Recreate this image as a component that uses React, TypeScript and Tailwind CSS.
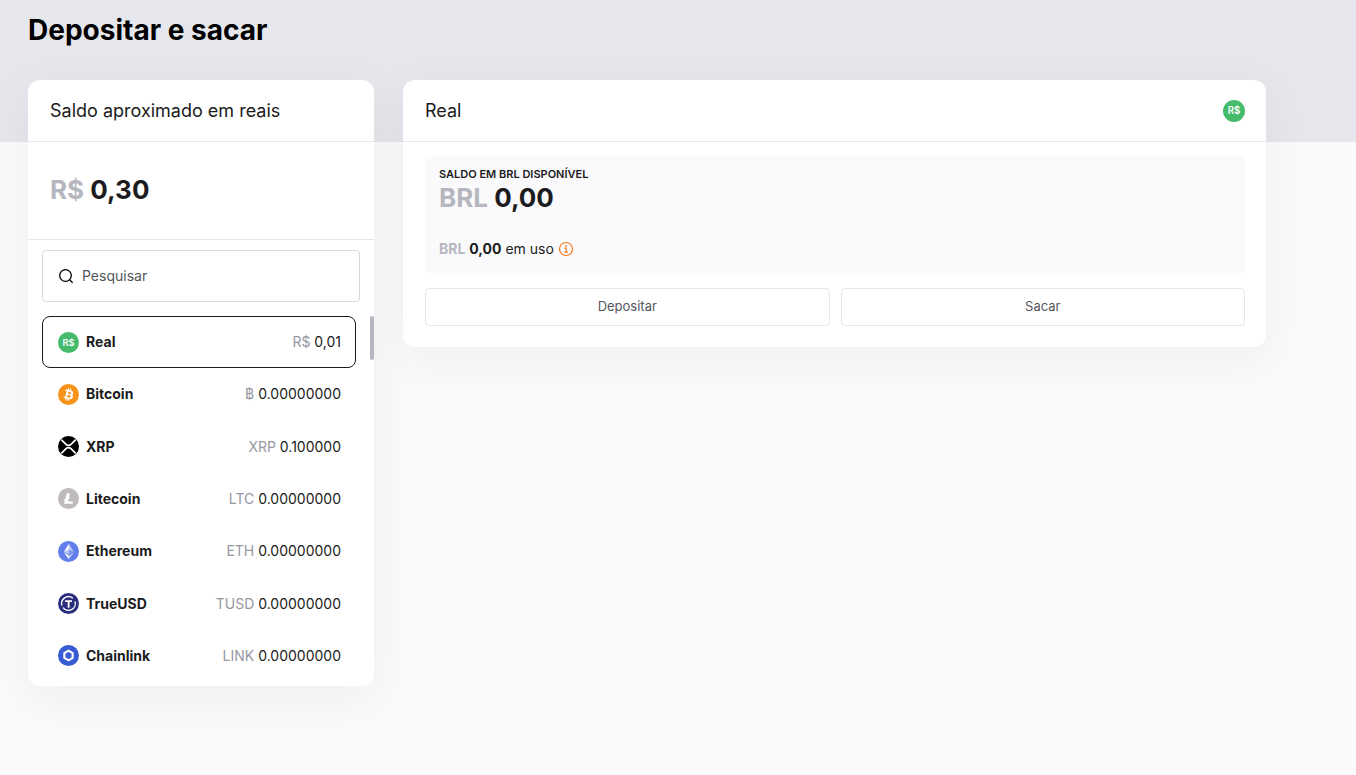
import React, { useState } from "react";

// Define types for the wallet list
interface Coin {
  id: string;
  name: string;
  symbol: string;
  balance: string;
  icon: React.ReactNode;
}

const RealIcon = () => (
  <svg viewBox="0 0 32 32" className="size-full" aria-hidden="true">
    <circle cx="16" cy="16" r="16" fill="#45bb6c" />
    <text
      x="16"
      y="21"
      textAnchor="middle"
      fill="#fff"
      className="font-['Inter',sans-serif] text-[14px] font-semibold"
    >
      R$
    </text>
  </svg>
);

const BitcoinIcon = () => (
  <svg viewBox="0 0 32 32" className="size-full" aria-hidden="true">
    <circle cx="16" cy="16" r="16" fill="#f7931a" />
    <path
      fill="#fff"
      fillRule="evenodd"
      d="M23.189 14.02c.314-2.096-1.283-3.223-3.465-3.975l.708-2.84-1.728-.43-.69 2.765c-.454-.114-.92-.22-1.385-.326l.695-2.783L15.596 6l-.708 2.839c-.376-.086-.746-.17-1.104-.26l.002-.009-2.384-.595-.46 1.846s1.283.294 1.256.312c.7.175.826.638.805 1.006l-.806 3.235c.048.012.11.03.18.057l-.183-.045-1.13 4.532c-.086.212-.303.531-.793.41.018.025-1.256-.313-1.256-.313l-.858 1.978 2.25.561c.418.105.828.215 1.231.318l-.715 2.872 1.727.43.708-2.84c.472.127.93.245 1.378.357l-.706 2.828 1.728.43.715-2.866c2.948.558 5.164.333 6.097-2.333.752-2.146-.037-3.385-1.588-4.192 1.13-.26 1.98-1.003 2.207-2.538zm-3.95 5.538c-.533 2.147-4.148.986-5.32.695l.95-3.805c1.172.293 4.929.872 4.37 3.11zm.535-5.569c-.487 1.953-3.495.96-4.47.717l.86-3.45c.975.243 4.118.696 3.61 2.733z"
    />
  </svg>
);

const XrpIcon = () => (
  <svg viewBox="0 0 32 32" className="size-full" aria-hidden="true">
    <circle cx="16" cy="16" r="16" fill="#000" />
    <g fill="none" stroke="#fff" strokeWidth="2.6">
      <path d="M5 5.500l7.300 7.300a5.200 5.200 0 007.400 0L27 5.500" />
      <path d="M5 26.500l7.300-7.300a5.200 5.200 0 017.400 0l7.300 7.300" />
    </g>
  </svg>
);

const LitecoinIcon = () => (
  <svg viewBox="0 0 32 32" className="size-full" aria-hidden="true">
    <circle cx="16" cy="16" r="16" fill="#bfbbbb" />
    <path
      fill="#fff"
      d="M10.427 19.214L9 19.768l.688-2.759 1.444-.58L13.213 8h5.129l-1.519 6.196 1.41-.571-.68 2.75-1.427.571-.848 3.483H23L22.127 24H9.252z"
    />
  </svg>
);

const EthereumIcon = () => (
  <svg viewBox="0 0 32 32" className="size-full" aria-hidden="true">
    <circle cx="16" cy="16" r="16" fill="#627eea" />
    <g fill="#fff">
      <path fillOpacity=".6" d="M16.498 4v8.870l7.497 3.350z" />
      <path d="M16.498 4L9 16.220l7.498-3.350z" />
      <path fillOpacity=".6" d="M16.498 21.968v6.027L24 17.616z" />
      <path d="M16.498 27.995v-6.028L9 17.616z" />
      <path fillOpacity=".2" d="M16.498 20.573l7.497-4.353-7.497-3.348z" />
      <path fillOpacity=".6" d="M9 16.220l7.498 4.353v-7.701z" />
    </g>
  </svg>
);

const TrueUsdIcon = () => (
  <svg viewBox="0 0 32 32" className="size-full" aria-hidden="true">
    <circle cx="16" cy="16" r="16" fill="#2b2e7f" />
    <g fill="none" stroke="#fff">
      <path
        d="M22.500 7.800A10.500 10.500 0 006 19.200M7.500 22.200A10.500 10.500 0 0026 13"
        strokeWidth="2"
      />
      <path d="M10.800 12.500h10.500M16.200 12.500v10" strokeWidth="2.800" />
    </g>
  </svg>
);

const ChainlinkIcon = () => (
  <svg viewBox="0 0 32 32" className="size-full" aria-hidden="true">
    <circle cx="16" cy="16" r="16" fill="#375bd2" />
    <path
      d="M16 8.700l6.300 3.650v7.300L16 23.300l-6.300-3.650v-7.300z"
      fill="none"
      stroke="#fff"
      strokeWidth="3.200"
    />
  </svg>
);

const coins: Coin[] = [
  { id: "brl", name: "Real", symbol: "R$", balance: "0,01", icon: <RealIcon /> },
  { id: "btc", name: "Bitcoin", symbol: "฿", balance: "0.00000000", icon: <BitcoinIcon /> },
  { id: "xrp", name: "XRP", symbol: "XRP", balance: "0.100000", icon: <XrpIcon /> },
  { id: "ltc", name: "Litecoin", symbol: "LTC", balance: "0.00000000", icon: <LitecoinIcon /> },
  { id: "eth", name: "Ethereum", symbol: "ETH", balance: "0.00000000", icon: <EthereumIcon /> },
  { id: "tusd", name: "TrueUSD", symbol: "TUSD", balance: "0.00000000", icon: <TrueUsdIcon /> },
  { id: "link", name: "Chainlink", symbol: "LINK", balance: "0.00000000", icon: <ChainlinkIcon /> },
];

const cardClass = "rounded-xl bg-white shadow-[0_12px_48px_rgba(30,30,40,0.05)]";

interface CoinRowProps {
  coin: Coin;
  selected: boolean;
  onSelect: (id: string) => void;
}

const CoinRow: React.FC<CoinRowProps> = ({ coin, selected, onSelect }) => (
  <li>
    <button
      type="button"
      aria-pressed={selected}
      onClick={() => onSelect(coin.id)}
      className={`flex h-[52px] w-full items-center rounded-lg border pr-3.5 pl-[15px] text-left ${
        selected ? "border-[#1b1b20]" : "border-transparent"
      }`}
    >
      <span className="size-[21px] shrink-0">{coin.icon}</span>
      <span className="ml-[7px] text-sm font-bold">{coin.name}</span>
      <span className="ml-auto text-sm">
        <span className="text-[#9698a2]">{coin.symbol}</span> {coin.balance}
      </span>
    </button>
  </li>
);

const App: React.FC = () => {
  const [selected, setSelected] = useState("brl");
  const [search, setSearch] = useState("");

  const visible = coins.filter((coin) =>
    coin.name.toLowerCase().includes(search.toLowerCase()),
  );

  return (
    <div className="min-h-screen bg-[linear-gradient(#e6e7ec_142px,#fafafc_142px)] pr-[90px] pb-8 pl-7 font-['Inter',sans-serif] text-[#1b1b20]">
      <h1 className="pt-3 text-[28px] leading-9 font-bold text-black">
        Depositar e sacar
      </h1>

      <main className="mt-8 grid grid-cols-[346px_1fr] items-start gap-[29px]">
        {/* Wallet list */}
        <section className={cardClass}>
          <h2 className="flex h-[62px] items-center border-b border-[#e6e7ec] px-[22px] text-[18px]">
            Saldo aproximado em reais
          </h2>
          <p className="flex h-[98px] items-center border-b border-[#e6e7ec] px-[22px] pb-0.5 text-[26px] font-bold">
            <span className="text-[#b5b6be]">R$</span>&nbsp;0,30
          </p>

          <label className="mx-3.5 mt-2.5 flex h-[52px] items-center rounded border border-[#d9dae2] px-[15px]">
            <svg
              viewBox="0 0 16 16"
              className="size-4 shrink-0"
              fill="none"
              stroke="#000"
              strokeWidth="1.300"
              aria-hidden="true"
            >
              <circle cx="7.500" cy="7.500" r="5.800" />
              <path d="M11.600 11.700l3 3" />
            </svg>
            <input
              type="text"
              aria-label="Pesquisar"
              placeholder="Pesquisar"
              value={search}
              onChange={(e) => setSearch(e.target.value)}
              className="ml-2 min-w-0 flex-1 text-sm outline-none placeholder:text-[#55565c]"
            />
          </label>

          <div className="mt-3.5 flex items-start pb-1 pl-3.5">
            <ul className="flex h-[366px] flex-1 flex-col justify-between">
              {visible.map((coin) => (
                <CoinRow
                  key={coin.id}
                  coin={coin}
                  selected={coin.id === selected}
                  onSelect={setSelected}
                />
              ))}
            </ul>
            <div className="ml-3.5 h-11 w-1 rounded-sm bg-[#b5b6be]" />
          </div>
        </section>

        {/* Selected wallet */}
        <section className={cardClass}>
          <header className="flex h-[62px] items-center justify-between border-b border-[#e6e7ec] pr-[21px] pl-[22px]">
            <h2 className="text-[18px]">Real</h2>
            <span className="size-[22px]">
              <RealIcon />
            </span>
          </header>

          <div className="pt-3.5 pr-[21px] pb-[21px] pl-[22px]">
            <div className="h-[117px] rounded bg-[#fafafc] px-3.5 pt-2.5">
              <h3 className="text-[11px] leading-4 font-semibold uppercase">
                Saldo em BRL disponível
              </h3>
              <p className="text-[26px] leading-8 font-bold">
                <span className="text-[#b5b6be]">BRL</span> 0,00
              </p>
              <p className="mt-[25px] flex items-center text-sm">
                <strong className="text-[#b5b6be]">BRL</strong>&nbsp;
                <strong>0,00</strong>&nbsp;em uso
                <button type="button" aria-label="Saldo em uso" className="ml-1">
                  <svg viewBox="0 0 16 16" className="size-4" fill="none" stroke="#f97a1f">
                    <circle cx="8" cy="8" r="6.500" strokeWidth="1.200" />
                    <path d="M6.500 7.200h1.700V11M6.300 11.200h3.600" strokeWidth="1.200" />
                    <circle cx="8" cy="4.900" r=".9" fill="#f97a1f" stroke="none" />
                  </svg>
                </button>
              </p>
            </div>

            <div className="mt-[15px] grid grid-cols-2 gap-[11px] text-[13px] text-[#55565c]">
              <button type="button" className="h-[38px] rounded-sm border border-[#e6e7ec]">
                Depositar
              </button>
              <button type="button" className="h-[38px] rounded-sm border border-[#e6e7ec]">
                Sacar
              </button>
            </div>
          </div>
        </section>
      </main>
    </div>
  );
};

export default App;
